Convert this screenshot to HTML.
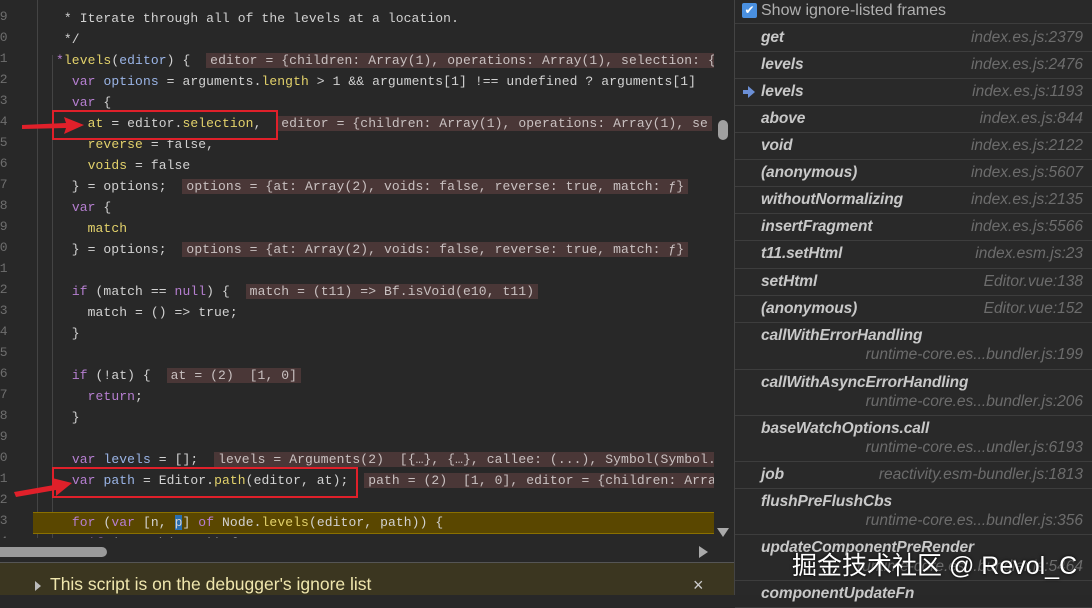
<!DOCTYPE html>
<html><head><meta charset="utf-8"><style>
*{margin:0;padding:0;box-sizing:border-box}
body{width:1092px;height:595px;overflow:hidden;background:#282828;position:relative;font-family:"Liberation Mono",monospace}
.ln{position:absolute;left:-8px;width:40px;font-size:13px;color:#6e6e6e;text-align:left}
.c{position:absolute;left:56px;font-size:13px;color:#d2d2d2;white-space:pre;line-height:21px;height:21px;letter-spacing:0.1px}
.k{color:#b67fd1}.v{color:#9ab4e6}.p{color:#e3d26b}.n{color:#d2d2d2}
.b{background:#4a3737;color:#c9c1c1;padding:0 4px}
.gl{position:absolute;width:1px;background:#444}
#right{position:absolute;left:734px;top:0;width:358px;height:595px;background:#292929;border-left:1px solid #444;font-family:"Liberation Sans",sans-serif}
.r{position:absolute;left:0;width:358px;border-bottom:1px solid #3d3d3d;font-style:italic;font-size:15.5px}
.nm{position:absolute;left:26px;color:#c8c8c8;font-weight:bold;letter-spacing:-0.1px}
.fl{position:absolute;right:10px;color:#6c6c6c}
.red{position:absolute;border:2px solid #e0202a}
</style></head><body>
<div class="gl" style="left:37px;top:0;height:560px"></div>
<div class="gl" style="left:52px;top:55px;height:505px"></div>
<div class="ln" style="top:9px">69</div><div class="ln" style="top:30px">70</div><div class="ln" style="top:51px">71</div><div class="ln" style="top:72px">72</div><div class="ln" style="top:93px">73</div><div class="ln" style="top:114px">74</div><div class="ln" style="top:135px">75</div><div class="ln" style="top:156px">76</div><div class="ln" style="top:177px">77</div><div class="ln" style="top:198px">78</div><div class="ln" style="top:219px">79</div><div class="ln" style="top:240px">80</div><div class="ln" style="top:261px">81</div><div class="ln" style="top:282px">82</div><div class="ln" style="top:303px">83</div><div class="ln" style="top:324px">84</div><div class="ln" style="top:345px">85</div><div class="ln" style="top:366px">86</div><div class="ln" style="top:387px">87</div><div class="ln" style="top:408px">88</div><div class="ln" style="top:429px">89</div><div class="ln" style="top:450px">90</div><div class="ln" style="top:471px">91</div><div class="ln" style="top:492px">92</div><div class="ln" style="top:513px">93</div><div class="ln" style="top:534px">94</div>

<div style="position:absolute;left:33px;top:512px;width:681px;height:22px;background:#5a4700;border-top:1px solid #8a7000;border-bottom:1px solid #8a7000"></div>

<div style="position:absolute;left:0;top:0;width:714px;height:560px;overflow:hidden">
<div class="c" style="top:8px"> * Iterate through all of the levels at a location.</div>
<div class="c" style="top:29px"> */</div>
<div class="c" style="top:50px"><span class="k">*</span><span class="p">levels</span>(<span class="v">editor</span>) {  <span class="b">editor = {children: Array(1), operations: Array(1), selection: {…}</span></div>
<div class="c" style="top:71px">  <span class="k">var</span> <span class="v">options</span> = arguments.<span class="p">length</span> &gt; 1 &amp;&amp; arguments[1] !== undefined ? arguments[1]</div>
<div class="c" style="top:92px">  <span class="k">var</span> {</div>
<div class="c" style="top:113px">    <span class="p">at</span> = editor.<span class="p">selection</span>,  <span class="b">editor = {children: Array(1), operations: Array(1), se</span></div>
<div class="c" style="top:134px">    <span class="p">reverse</span> = false,</div>
<div class="c" style="top:155px">    <span class="p">voids</span> = false</div>
<div class="c" style="top:176px">  } = options;  <span class="b">options = {at: Array(2), voids: false, reverse: true, match: ƒ}</span></div>
<div class="c" style="top:197px">  <span class="k">var</span> {</div>
<div class="c" style="top:218px">    <span class="p">match</span></div>
<div class="c" style="top:239px">  } = options;  <span class="b">options = {at: Array(2), voids: false, reverse: true, match: ƒ}</span></div>
<div class="c" style="top:281px">  <span class="k">if</span> (match == <span class="k">null</span>) {  <span class="b">match = (t11) =&gt; Bf.isVoid(e10, t11)</span></div>
<div class="c" style="top:302px">    match = () =&gt; true;</div>
<div class="c" style="top:323px">  }</div>
<div class="c" style="top:365px">  <span class="k">if</span> (!at) {  <span class="b">at = (2)  [1, 0]</span></div>
<div class="c" style="top:386px">    <span class="k">return</span>;</div>
<div class="c" style="top:407px">  }</div>
<div class="c" style="top:449px">  <span class="k">var</span> <span class="v">levels</span> = [];  <span class="b">levels = Arguments(2)  [{…}, {…}, callee: (...), Symbol(Symbol.iterator)</span></div>
<div class="c" style="top:470px">  <span class="k">var</span> <span class="v">path</span> = Editor.<span class="p">path</span>(editor, at);  <span class="b">path = (2)  [1, 0], editor = {children: Array(1)</span></div>
<div class="c" style="top:512px">  <span class="k">for</span> (<span class="k">var</span> [n, <span style="background:#2a6fb0">p</span>] <span class="k">of</span> Node.<span class="p">levels</span>(editor, path)) {</div>
<div class="c" style="top:533px">    <span class="k">if</span> (!match(n, p)) {</div>
</div>

<div style="position:absolute;left:0;top:538px;width:733px;height:24px;background:#282828"></div>
<div style="position:absolute;left:0;top:547px;width:107px;height:10px;background:#9a9a9a;border-radius:0 5px 5px 0"></div>
<div style="position:absolute;left:699px;top:546px;width:0;height:0;border-top:6px solid transparent;border-bottom:6px solid transparent;border-left:9px solid #aaa"></div>
<div style="position:absolute;left:718px;top:120px;width:10px;height:20px;background:#a0a0a0;border-radius:5px"></div>
<div style="position:absolute;left:717px;top:528px;width:0;height:0;border-left:6px solid transparent;border-right:6px solid transparent;border-top:9px solid #aaa"></div>
<div style="position:absolute;left:0;top:562px;width:734px;height:33px;background:#3b3620;border-top:1px solid #555"></div>
<div style="position:absolute;left:35px;top:581px;width:0;height:0;border-top:5px solid transparent;border-bottom:5px solid transparent;border-left:6px solid #bbb"></div>
<div style="position:absolute;left:50px;top:574px;font-family:'Liberation Sans',sans-serif;font-size:17.5px;color:#efe6ad">This script is on the debugger's ignore list</div>
<div style="position:absolute;left:693px;top:575px;font-family:'Liberation Sans',sans-serif;font-size:18px;color:#ccc">×</div>

<div class="red" style="left:52px;top:110px;width:226px;height:30px"></div>
<div class="red" style="left:52px;top:467px;width:306px;height:31px"></div>
<svg style="position:absolute;left:18px;top:114px" width="70" height="24"><path d="M4 11 L48 9 L46 3 L66 11 L46 20 L48 14 L4 15 Z" fill="#e0202a"/></svg>
<svg style="position:absolute;left:10px;top:472px" width="70" height="28"><path d="M4 20 L44 13 L42 6 L62 11 L46 24 L46 18 L6 25 Z" fill="#e0202a"/></svg>

<div id="right">
<div style="position:absolute;left:0;top:0;width:358px;height:24px;border-bottom:1px solid #3d3d3d">
<div style="position:absolute;left:7px;top:3px;width:15px;height:15px;background:#4a90e0;border-radius:2px;color:#fff;font-size:12px;line-height:15px;text-align:center;font-family:'DejaVu Sans'">✔</div>
<div style="position:absolute;left:26px;top:2px;font-size:16px;color:#b0b0b0">Show ignore-listed frames</div></div>
<div class="r" style="top:25px;height:27px"><span class="nm" style="top:4px">get</span><span class="fl" style="top:4px">index.es.js:2379</span></div>
<div class="r" style="top:52px;height:27px"><span class="nm" style="top:4px">levels</span><span class="fl" style="top:4px">index.es.js:2476</span></div>
<div class="r" style="top:79px;height:27px"><svg style="position:absolute;left:7px;top:7px" width="14" height="12"><path d="M1 4 H6 V0 L13 6 L6 12 V8 H1 Z" fill="#6b8fd6"/></svg><span class="nm" style="top:4px">levels</span><span class="fl" style="top:4px">index.es.js:1193</span></div>
<div class="r" style="top:106px;height:27px"><span class="nm" style="top:4px">above</span><span class="fl" style="top:4px">index.es.js:844</span></div>
<div class="r" style="top:133px;height:27px"><span class="nm" style="top:4px">void</span><span class="fl" style="top:4px">index.es.js:2122</span></div>
<div class="r" style="top:160px;height:27px"><span class="nm" style="top:4px">(anonymous)</span><span class="fl" style="top:4px">index.es.js:5607</span></div>
<div class="r" style="top:187px;height:27px"><span class="nm" style="top:4px">withoutNormalizing</span><span class="fl" style="top:4px">index.es.js:2135</span></div>
<div class="r" style="top:214px;height:27px"><span class="nm" style="top:4px">insertFragment</span><span class="fl" style="top:4px">index.es.js:5566</span></div>
<div class="r" style="top:241px;height:28px"><span class="nm" style="top:4px">t11.setHtml</span><span class="fl" style="top:4px">index.esm.js:23</span></div>
<div class="r" style="top:269px;height:27px"><span class="nm" style="top:4px">setHtml</span><span class="fl" style="top:4px">Editor.vue:138</span></div>
<div class="r" style="top:296px;height:27px"><span class="nm" style="top:4px">(anonymous)</span><span class="fl" style="top:4px">Editor.vue:152</span></div>
<div class="r" style="top:323px;height:47px"><span class="nm" style="top:4px">callWithErrorHandling</span><span class="fl" style="top:23px">runtime-core.es...bundler.js:199</span></div>
<div class="r" style="top:370px;height:46px"><span class="nm" style="top:4px">callWithAsyncErrorHandling</span><span class="fl" style="top:23px">runtime-core.es...bundler.js:206</span></div>
<div class="r" style="top:416px;height:46px"><span class="nm" style="top:4px">baseWatchOptions.call</span><span class="fl" style="top:23px">runtime-core.es...undler.js:6193</span></div>
<div class="r" style="top:462px;height:27px"><span class="nm" style="top:4px">job</span><span class="fl" style="top:4px">reactivity.esm-bundler.js:1813</span></div>
<div class="r" style="top:489px;height:46px"><span class="nm" style="top:4px">flushPreFlushCbs</span><span class="fl" style="top:23px">runtime-core.es...bundler.js:356</span></div>
<div class="r" style="top:535px;height:46px"><span class="nm" style="top:4px">updateComponentPreRender</span><span class="fl" style="top:23px">runtime-core.es...bundler.js:5464</span></div>
<div class="r" style="top:581px;height:27px"><span class="nm" style="top:4px">componentUpdateFn</span></div>
</div>
<div style="position:absolute;left:792px;top:546px;font-family:'Liberation Sans','Noto Sans CJK SC',sans-serif;font-size:25px;color:#fff;text-shadow:0 0 3px #000">掘金技术社区 @ Revol_C</div>
</body></html>
